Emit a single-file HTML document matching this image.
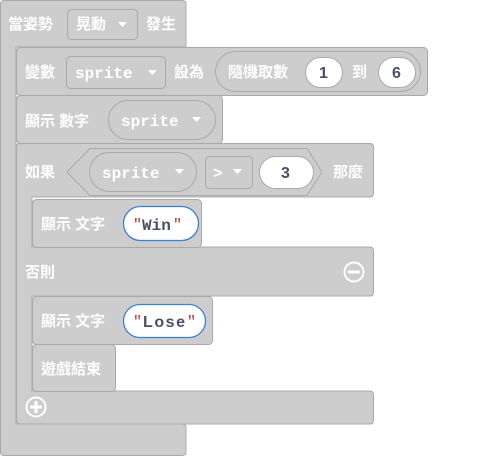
<html><body style="margin:0;background:#fff">
<svg width="480" height="456" xmlns="http://www.w3.org/2000/svg" style="display:block">
<style>
.b{fill:#cdcdcd;stroke:#a9a9a9;stroke-width:1}
.t{fill:#fff;font-family:"Liberation Sans","Noto Sans CJK TC",sans-serif;font-size:15px;font-weight:bold}
.m{fill:#fff;font-family:"Liberation Mono",monospace;font-size:16px;font-weight:bold}
.d{fill:none;stroke:#a9a9a9}
.w{fill:#fff;stroke:#a9a9a9}
.n{fill:#4a5068;font-family:"Liberation Sans",sans-serif;font-size:16px;font-weight:bold}
.s{fill:#4a5068;font-family:"Liberation Mono",monospace;font-size:16px;font-weight:bold}
.q{fill:#b03030;font-family:"Liberation Mono",monospace;font-size:15px}
</style>
<path class="b" d="M4,0.5H182Q186,0.5 186,4V47H16V424H182Q186,424 186,428V452Q186,455.5 182,455.5H4Q0.5,455.5 0.5,452V4Q0.5,0.5 4,0.5Z"/>
<text class="t" x="8" y="29">當姿勢</text>
<rect x="67.5" y="9.5" width="70" height="30" rx="4" class="d"/>
<text class="t" x="76" y="29">晃動</text><path d="M118,22h9l-4.5,5z" fill="#fff"/>
<text class="t" x="146" y="29">發生</text>

<rect class="b" x="16.5" y="47.5" width="411" height="48" rx="4"/>
<text class="t" x="25" y="77">變數</text>
<rect x="66.5" y="56.5" width="99" height="32" rx="4" class="d"/>
<text class="m" x="75" y="78">sprite</text><path d="M148,70h9l-4.5,5z" fill="#fff"/>
<text class="t" x="174" y="77">設為</text>
<rect x="215.5" y="51.5" width="205" height="40" rx="20" class="d"/>
<text class="t" x="228" y="77">隨機取數</text>
<rect x="305.5" y="57.5" width="37" height="30" rx="15" class="w"/><text class="n" x="319" y="78">1</text>
<text class="t" x="352" y="77">到</text>
<rect x="378.5" y="57.5" width="37" height="30" rx="15" class="w"/><text class="n" x="392" y="78">6</text>

<rect class="b" x="16.5" y="95.5" width="206" height="48" rx="4"/>
<text class="t" x="25" y="126">顯示 數字</text>
<rect x="108.5" y="100.5" width="107" height="39" rx="19.5" class="d"/>
<text class="m" x="121" y="126">sprite</text><path d="M192,117h9l-4.5,5z" fill="#fff"/>

<path class="b" d="M20,143.5H370Q373.5,143.5 373.5,147V193Q373.5,197 370,197H32V247H370Q373.5,247 373.5,251V292Q373.5,296 370,296H32V391H370Q373.5,391 373.5,395V420Q373.5,424 370,424H20Q16.5,424 16.5,420V147Q16.5,143.5 20,143.5Z"/>
<text class="t" x="25" y="177">如果</text>
<path class="d" d="M90,148.5H307L322,172L307,195.5H90L67,172Z"/>
<rect x="89.5" y="152.5" width="107" height="39" rx="19.5" class="d"/>
<text class="m" x="102" y="178">sprite</text><path d="M175,169h9l-4.5,5z" fill="#fff"/>
<rect x="205.5" y="156.5" width="47" height="32" rx="4" class="d"/>
<text class="m" x="213" y="178">&gt;</text><path d="M233,169h9l-4.5,5z" fill="#fff"/>
<rect x="259.5" y="156.5" width="54" height="32" rx="16" class="w"/><text class="n" x="281" y="178">3</text>
<text class="t" x="333" y="177">那麼</text>

<rect class="b" x="32.5" y="199.5" width="169" height="48" rx="4"/>
<text class="t" x="41" y="229">顯示 文字</text>
<rect x="123.5" y="206.5" width="75" height="34" rx="17" fill="#fff" stroke="#3b7fd0" stroke-width="1.3"/>
<text class="q" x="133" y="229">"</text><text class="s" x="142" y="230">Win</text><text class="q" x="173" y="229">"</text>

<text class="t" x="25" y="277">否則</text>
<circle cx="354" cy="272" r="9.5" fill="none" stroke="#fff" stroke-width="2"/>
<path d="M348,272h12" stroke="#fff" stroke-width="3"/>

<rect class="b" x="32.5" y="296.5" width="180" height="48" rx="4"/>
<text class="t" x="41" y="326">顯示 文字</text>
<rect x="123.5" y="304.5" width="82" height="33" rx="16.5" fill="#fff" stroke="#3b7fd0" stroke-width="1.3"/>
<text class="q" x="133" y="326">"</text><text class="n" x="143" y="327" textLength="42">Lose</text><text class="q" x="187" y="326">"</text>

<rect class="b" x="32.5" y="344.5" width="83" height="47" rx="4"/>
<text class="t" x="41" y="374">遊戲結束</text>

<circle cx="36" cy="407" r="9.5" fill="none" stroke="#fff" stroke-width="2"/>
<path d="M30,407h12M36,401v12" stroke="#fff" stroke-width="3"/>
</svg>
</body></html>
